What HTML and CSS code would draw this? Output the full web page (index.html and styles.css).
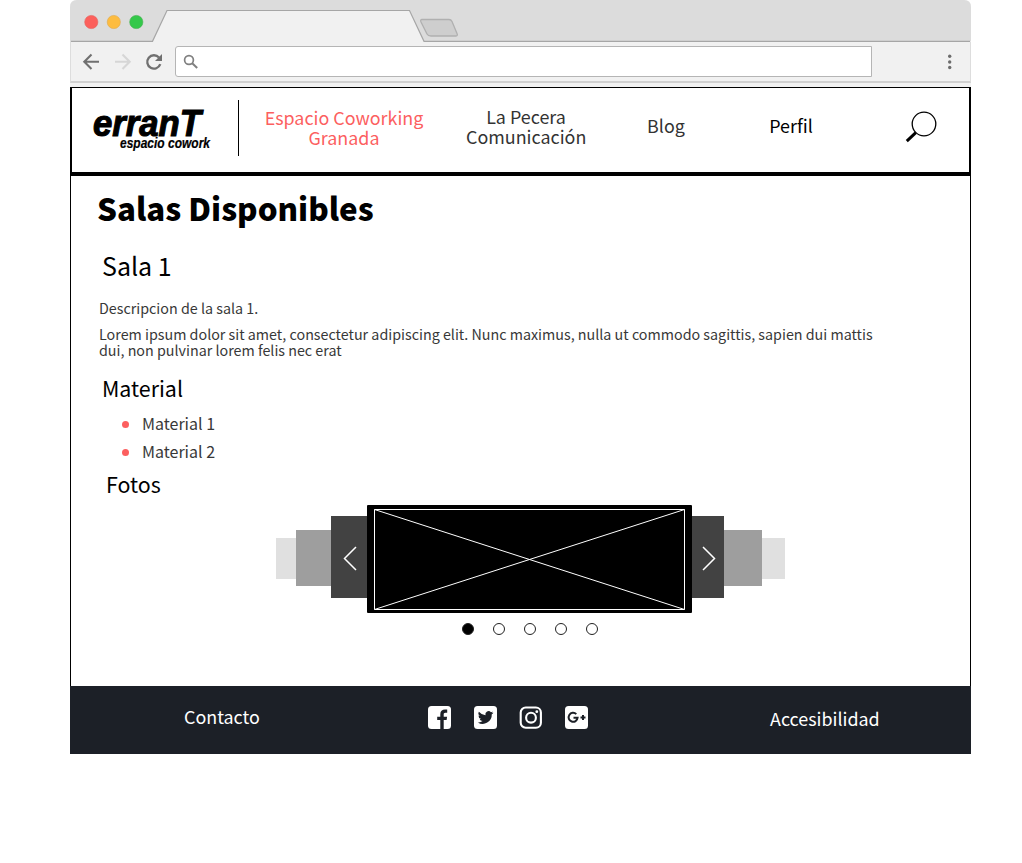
FILE: index.html
```html
<!DOCTYPE html>
<html lang="es">
<head>
<meta charset="utf-8">
<title>Salas Disponibles</title>
<link rel="stylesheet" href="styles.css">
</head>
<body>
<div class="window">
  <div class="chrome">
    <svg class="tabstrip" width="901" height="42" viewBox="0 0 901 42">
      <path d="M0 42V7Q0 0 7 0H894Q901 0 901 7V42Z" fill="#dcdcdc"/>
      <path d="M1 41.3H82.5L97 10.5H339.500L354 41.300H901V42H1Z" fill="#f1f1f1"/>
      <path d="M1 41.300H82.500L97 10.500H339.500L354 41.300H900" fill="none" stroke="#a6a6a6" stroke-width="1.2"/>
      <path d="M352 19.500H379Q381 19.500 382 21.500L387 33.500Q388 36 386 36H361Q358 36 357 34L351 22Q350 19.500 352 19.500Z" fill="#cecece" stroke="#b0b0b0" stroke-width="1.3"/>
      <circle cx="21.300" cy="22" r="6.600" fill="#fc605c" stroke="#e2625d" stroke-width=".6"/>
      <circle cx="43.800" cy="22" r="6.600" fill="#fdbc40" stroke="#dfa94c" stroke-width=".6"/>
      <circle cx="66.300" cy="22" r="6.600" fill="#34c84a" stroke="#3fae4c" stroke-width=".6"/>
    </svg>
    <div class="toolbar">
      <svg class="controls" width="105" height="41" viewBox="0 0 105 41">
        <g fill="none" stroke-width="2.100">
          <path d="M29 19.800H14.500M21.500 12.600L14.300 19.800L21.500 27" stroke="#707070"/>
          <path d="M45 19.800H59.500M52.500 12.600L59.700 19.800L52.500 27" stroke="#d6d6d6"/>
          <path d="M89 15.500A6.700 6.700 0 1 0 90.300 22.200" stroke="#707070" stroke-width="2.300"/>
        </g>
        <path d="M92 12V19H85Z" fill="#707070"/>
      </svg>
      <div class="address">
        <svg width="16" height="16" viewBox="0 0 16 16" fill="none" stroke="#808080">
          <circle cx="6" cy="6" r="4.400" stroke-width="1.700"/><path d="M9.200 9.200L14.200 14" stroke-width="2"/>
        </svg>
      </div>
      <svg class="more" width="6" height="16" viewBox="0 0 6 16" fill="#6c6c6c"><circle cx="2.700" cy="2.300" r="1.700"/><circle cx="2.700" cy="8" r="1.700"/><circle cx="2.700" cy="13.500" r="1.700"/></svg>
    </div>
  </div>
  <header class="header">
    <svg class="logo" width="166" height="84" viewBox="0 0 166 84">
      <text class="logo-name" x="21" y="48.400" textLength="108" lengthAdjust="spacingAndGlyphs">erranT</text>
      <text class="logo-sub" x="48" y="60" textLength="90" lengthAdjust="spacingAndGlyphs">espacio cowork</text>
    </svg>
    <span class="divider"></span>
    <nav class="nav">
      <a class="nav-item nav-active">Espacio Coworking<br>Granada</a>
      <a class="nav-item nav-pecera">La Pecera<br>Comunicación</a>
      <a class="nav-item nav-blog">Blog</a>
      <a class="nav-item nav-profile">Perfil</a>
    </nav>
    <svg class="search" width="34" height="34" viewBox="0 0 34 34" fill="none" stroke="#000">
      <circle cx="19" cy="14" r="11.800" stroke-width="1.300"/><path d="M10.800 22.700L1.800 31.200" stroke-width="3"/>
    </svg>
  </header>
  <main class="content">
    <h1 class="title"><span>Salas Disponibles</span></h1>
    <h2 class="room"><span>Sala 1</span></h2>
    <p class="text"><span>Descripcion de la sala 1.</span></p>
    <p class="text lorem"><span>Lorem ipsum dolor sit amet, consectetur adipiscing elit. Nunc maximus, nulla ut commodo sagittis, sapien dui mattis<br>dui, non pulvinar lorem felis nec erat</span></p>
    <h3 class="subtitle">Material</h3>
    <ul class="materials"><li>Material 1</li><li>Material 2</li></ul>
    <h3 class="subtitle photos">Fotos</h3>
    <div class="carousel">
      <div class="far"></div>
      <div class="mid"></div>
      <div class="near near-left"><svg width="16" height="26" viewBox="0 0 16 26"><path d="M14 1L2.500 12.500L14 24"/></svg></div>
      <div class="slide"><svg width="311" height="101" viewBox="0 0 311 101"><path d="M.5 .5H310.500V100.500H.5ZM.5 .5L310.500 100.500M.5 100.500L310.500 .5"/></svg></div>
      <div class="near near-right"><svg width="16" height="26" viewBox="0 0 16 26"><path d="M2 1L13.500 12.500L2 24"/></svg></div>
      <div class="mid mid-right"></div>
      <div class="far far-right"></div>
    </div>
    <div class="dots"><i class="dot on"></i><i class="dot"></i><i class="dot"></i><i class="dot"></i><i class="dot"></i></div>
  </main>
  <footer class="footer">
    <a class="contact">Contacto</a>
    <div class="social">
      <svg width="23" height="23" viewBox="0 0 23 23"><rect width="23" height="23" rx="3.500" fill="#fff"/><path d="M12.300 23V14H9.200V10.700H12.300V8.200C12.300 5 14.100 3.500 17 3.500H19.200V6.800H17.500C16 6.800 15.700 7.500 15.700 8.600V10.700H19.100L18.600 14H15.700V23Z" fill="#1c2027"/></svg>
      <svg width="23" height="23" viewBox="0 0 23 23"><rect width="23" height="23" rx="3.500" fill="#fff"/><path transform="translate(3.800 3.700) scale(.65)" d="M24 4.600a10 10 0 0 1-2.800.8 5 5 0 0 0 2.100-2.700 10 10 0 0 1-3.100 1.200 4.900 4.900 0 0 0-8.400 4.500A14 14 0 0 1 1.700 3.200a4.900 4.900 0 0 0 1.500 6.500 5 5 0 0 1-2.200-.6 4.900 4.900 0 0 0 3.900 4.900 5 5 0 0 1-2.200.1 4.900 4.900 0 0 0 4.600 3.400A10 10 0 0 1 0 19.500 14 14 0 0 0 21.500 7.100 10 10 0 0 0 24 4.600Z" fill="#1c2027"/></svg>
      <svg width="23" height="23" viewBox="0 0 23 23" fill="none" stroke="#fff" stroke-width="2.100"><rect x="1.700" y="1.500" width="20.200" height="20.200" rx="5"/><circle cx="12" cy="11.700" r="4.900"/><circle cx="17.800" cy="5.700" r="1.400" fill="#fff" stroke="none"/></svg>
      <svg width="23" height="23" viewBox="0 0 23 23" fill="none" stroke="#1c2027" stroke-width="2"><rect width="23" height="23" rx="3.500" fill="#fff" stroke="none"/><path d="M11.300 8.100A4.500 4.500 0 1 0 12.600 11.700H8.500M15.500 11.500H20.500M18 9V14"/></svg>
    </div>
    <a class="access">Accesibilidad</a>
  </footer>
</div>
</body>
</html>
```
FILE: styles.css
```css
* { box-sizing: border-box; }
body { margin: 0; background: #fff; color: #000; font-family: "Noto Sans CJK SC", sans-serif; }
svg { display: block; flex: none; }
h1, h2, h3, p, ul { margin: 0; padding: 0; font-weight: 400; }
.window { width: 901px; margin-left: 70px; }
.chrome { height: 87px; background: #f1f1f1; border-radius: 7px 7px 0 0; }
.toolbar { display: flex; align-items: flex-start; height: 41px; border-bottom: 2px solid #d0d0d0; border-left: 1px solid #ddd; border-right: 1px solid #ddd; }
.controls { margin-left: -1px; }
.address { width: 697px; height: 31px; margin-top: 4px; padding: 7px 7px; background: #fff; border: 1px solid #b5b5b5; border-radius: 3px 0 0 3px; }
.more { margin: 12px 0 0 75px; }
.header { display: flex; align-items: flex-start; height: 89px; border: solid #000; border-width: 1px 2px 4px; }
.logo-name { font: italic bold 36px "Liberation Sans", sans-serif; stroke: #000; stroke-width: 1.1px; }
.logo-sub { font: italic bold 14px "Liberation Sans", sans-serif; stroke: #000; stroke-width: .2px; }
.divider { width: 1px; height: 56px; margin-top: 12px; background: #000; }
.nav { display: flex; width: 666px; font-size: 17.9px; line-height: 20px; text-align: center; color: #333; white-space: nowrap; }
.nav-active { width: 160px; margin: 19px 0 0 25px; color: #fc5f5f; }
.nav-pecera { width: 120px; margin: 18px 0 0 42px; }
.nav-blog { width: 38px; margin: 27px 0 0 61px; }
.nav-profile { width: 44px; margin: 27px 0 0 84px; color: #000; }
.search { margin-top: 22px; }
.content { height: 510px; border: solid #000; border-width: 0 1px; padding: 12px 0 0 28px; white-space: nowrap; }
.title { font-size: 31.25px; line-height: 40px; font-weight: 900; margin-left: -2px; }
.room { font-size: 25px; line-height: 34px; margin: 20px 0 0 3px; }
.text { font-size: 14.31px; line-height: 16px; color: #383838; margin-top: 18px; }
.lorem { margin-top: 10px; }
.subtitle { font-size: 21.4px; line-height: 28px; margin: 16px 0 0 3px; }
.materials { list-style: none; margin-top: 7px; color: #383838; font-size: 16px; line-height: 28px; }
.materials li { display: flex; align-items: center; height: 28px; padding-left: 23px; }
.materials li::before { content: ""; width: 7px; height: 7px; margin: 2px 13px 0 0; border-radius: 50%; background: #fc5f5f; }
.photos { margin: 5px 0 0 7px; }
.carousel { display: flex; align-items: center; height: 108px; margin: 7px 0 0 177px; }
.far { width: 20px; height: 41px; margin-top: -2px; background: #e0e0e0; }
.mid { width: 35px; height: 56px; margin-top: -2px; background: #9e9e9e; }
.near { display: flex; align-items: center; width: 36px; height: 82px; margin-top: -4px; padding-top: 3px; background: #424242; }
.near path { fill: none; stroke: #fff; stroke-width: 1.5; }
.near-left { padding-left: 11px; }
.near-right { width: 32px; padding-left: 9px; }
.mid-right { width: 38px; }
.far-right { width: 23px; }
.slide { width: 325px; height: 108px; padding: 4px 7px; background: #000; border-radius: 1px; }
.slide path { fill: none; stroke: #fff; stroke-width: 1; }
.dots { display: flex; gap: 19px; margin: 10px 0 0 363px; }
.dot { width: 12px; height: 12px; border: 1px solid #222; border-radius: 50%; }
.on { background: #000; }
.footer { display: flex; align-items: flex-start; height: 68px; background: #1c2027; color: #fff; font-size: 17.9px; line-height: 24px; }
.contact { width: 76px; margin: 18px 0 0 114px; white-space: nowrap; }
.social { display: flex; width: 160px; justify-content: space-between; margin: 20px 0 0 168px; }
.access { margin: 20px 0 0 182px; }
```
